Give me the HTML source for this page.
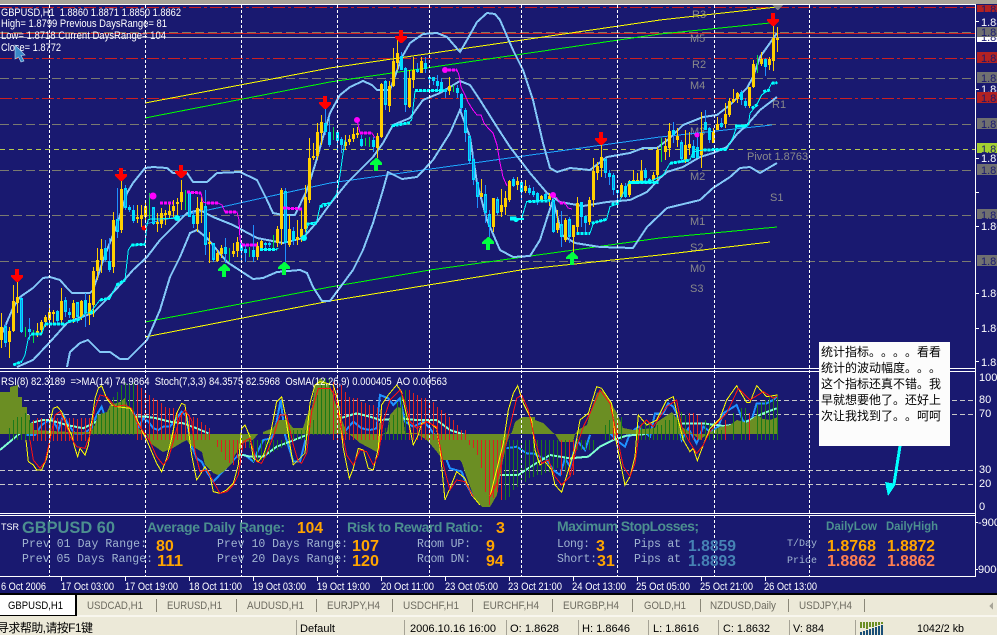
<!DOCTYPE html>
<html lang="zh"><head><meta charset="utf-8"><title>GBPUSD,H1</title>
<style>
html,body{margin:0;padding:0;background:#191970;width:997px;height:635px;overflow:hidden}
svg{display:block}
text{font-family:"Liberation Sans","Noto Sans CJK SC",sans-serif;white-space:pre}
.w{fill:#fff;font-size:11px}
.g{fill:#8a8a8a;font-size:11px}
.tag{fill:#191970;font-size:11px}
.t{fill:#4c8f8f;font-weight:bold;font-size:14px}
.o{fill:#ffa500;font-weight:bold;font-size:16px}
.c{fill:coral;font-weight:bold;font-size:16px}
.m{fill:#a0b4d0;font-family:"Liberation Mono",monospace;font-size:11.5px}
.b{fill:#4682b4;font-size:16px;font-weight:bold}
.tab{fill:#6d6b60;font-size:11px}
.st{fill:#000;font-size:11px}
.cn{fill:#000;font-family:"WenQuanYi Zen Hei","Noto Sans CJK SC",sans-serif;font-size:12px}
.n{vector-effect:non-scaling-stroke;fill:none}
</style></head><body>
<svg xmlns="http://www.w3.org/2000/svg" width="997" height="635" viewBox="0 0 997 635" shape-rendering="crispEdges">
<defs>
<path id="dn" d="M-2 0H2V6H6V8L1 13H-1L-6 8V6H-2Z" fill="#ff0000"/>
<path id="up" d="M0 0H1L6 5V7H2V13H-2V7H-6V5Z" fill="#00ff40"/>
</defs>
<rect width="997" height="635" fill="#191970"/>
<rect width="997" height="4" fill="#a9a59a"/>
<rect y="4" width="976" height="1" fill="#fff"/>

<!-- horizontal levels -->
<g fill="none" stroke-width="1">
<path d="M0 7.5H975M0 58.5H975M0 98.5H975" stroke="#cc2020" stroke-dasharray="12 3 3 3"/>
<path d="M0 32.5H975M0 78.5H975M0 124.5H975M0 170.5H975M0 215.5H975M0 261.5H975" stroke="#7a7a70" stroke-dasharray="9 4"/>
<path d="M0 149.5H975" stroke="#b4c850" stroke-dasharray="5 4"/>
<path d="M0 33.5H975" stroke="#d02020"/>
<path d="M0 37.5H975" stroke="#a0a0b8"/>
</g>

<!-- pivot labels -->
<g class="g">
<text x="692" y="18" class="g">R3</text><text x="690" y="42" class="g">M5</text><text x="692" y="68" class="g">R2</text><text x="690" y="89" class="g">M4</text><text x="772" y="108" class="g">R1</text><text x="690" y="135" class="g">M3</text><text x="747" y="160" class="g">Pivot 1.8763</text><text x="690" y="180" class="g">M2</text><text x="770" y="201" class="g">S1</text><text x="690" y="225" class="g">M1</text><text x="690" y="251" class="g">S2</text><text x="690" y="272" class="g">M0</text><text x="690" y="292" class="g">S3</text>
</g>

<!-- channels -->
<g fill="none" stroke-width="1">
<path d="M145 103L330 68L660 20L777 7" stroke="#ffff00"/>
<path d="M145 118L330 82L660 34L770 23" stroke="#00ff00"/>
<path d="M145 322L330 287L430 270L660 238L777 227" stroke="#00ff00"/>
<path d="M145 337L330 301L527 269L660 255L770 242" stroke="#ffff00"/>
<path d="M145 224L330 183L660 137L772 125" stroke="#1ea8ff"/>
</g>

<!-- bollinger -->
<g fill="none" stroke="#84c8f8" stroke-width="2">
<path d="M0 338L13 308L20 297L33 288L43 278L50 277L60 280L67 288L72 293L90 293L93 290L105 255L117 225L127 193L133 183L145 168L153 167L167 168L173 173L187 173L193 182L207 182L217 173L240 172L257 180L267 200L273 213L283 215L295 215L307 190L315 165L330 113L340 95L350 87L363 81L372 85L377 90L390 90L402 57L410 43L423 34L437 33L447 37L460 52L467 40L477 22L487 13L495 14L500 20L513 50L523 70L533 100L543 143L550 168L557 172L570 168L590 170L607 157L630 153L643 148L657 148L670 138L683 125L703 117L717 115L730 105L747 88L753 77L760 57L770 43L777 33"/>
<path d="M17 367L33 360L50 342L67 323L73 320L93 313L103 303L120 285L133 270L147 257L160 240L173 227L187 213L200 210L213 217L233 225L257 238L283 243L303 238L317 222L330 204L347 183L363 167L373 157L383 143L393 125L410 118L423 100L440 93L460 81L470 85L480 100L497 127L510 147L530 173L547 193L560 202L583 206L607 202L630 200L647 192L660 178L667 172L683 167L700 157L713 153L727 147L737 134L747 125L760 110L777 97"/>
<path d="M67 367L70 352L80 343L88 340L100 352L110 352L120 359L128 359L147 340L160 310L170 277L180 257L190 233L197 230L207 238L227 262L253 279L263 278L277 272L300 270L307 273L313 287L322 301L330 301L353 270L363 250L373 223L383 190L388 172L402 179L417 177L433 160L450 133L460 110L470 137L477 183L487 220L500 250L513 257L530 256L540 240L548 215L553 200L557 215L562 235L575 243L600 247L633 248L647 227L667 208L700 200L713 188L730 177L740 168L750 167L760 173L777 163"/>
</g>

<!-- candles -->
<g fill="none" transform="translate(.5 0)">
<path stroke="#ffcf00" stroke-width="1" d="M1 313V348M9 327V358M13 285V332M17 282V313M37 323V337M41 320V335M45 315V327M49 304V323M53 310V323M61 288V323M73 300V323M81 300V320M89 295V325M93 267V317M97 248V280M101 239V273M113 212V273M121 175V233M137 205V223M141 205V227M145 202V223M157 213V232M161 208V228M165 210V225M169 203V218M173 200V217M177 198V215M181 180V210M197 197V232M201 197V223M209 232V263M217 250V262M221 245V258M233 243V257M237 237V257M257 242V260M261 240V250M277 226V247M281 188V245M289 215V247M297 220V245M301 210V242M305 185V232M309 138V203M313 143V160M317 123V160M321 115V145M345 135V150M349 135V145M353 128V142M357 127V138M377 133V158M381 83V138M389 81V112M393 48V87M397 40V70M409 70V108M413 57V88M421 57V73M449 77V95M481 179V197M493 198V232M501 189V217M505 191V215M509 180V202M517 177V190M525 180V193M541 195V202M549 193V206M557 210V233M565 218V242M573 225V253M577 197V233M589 197V225M593 158V207M597 162V180M601 145V177M621 183V198M629 180V197M633 170V183M637 173V184M641 160V183M653 172V183M657 147V180M665 138V160M669 123V157M677 128V147M685 130V163M689 132V155M701 112V168M713 128V143M717 117V130M725 103V128M729 98V117M733 89V103M737 92V103M749 87V108M753 60V88M761 52V66M769 57V70M773 25V71M777 27V52"/>
<path stroke="#ffcf00" stroke-width="3" d="M1 327V340M9 331V342M13 301V331M17 297V303M37 331V333M41 322V330M45 317V322M49 312V320M53 312V314M61 301V320M73 303V318M81 301V317M89 303V315M93 271V305M97 260V271M101 249V260M113 220V267M121 189V230M137 217V219M141 215V219M145 206V217M157 222V224M161 213V224M165 213V215M169 211V215M173 206V211M177 202V204M181 192V202M197 208V224M201 202V210M209 242V244M217 253V261M221 248V254M233 251V254M237 242V251M257 246V257M261 241V248M277 229V243M281 190V229M289 229V245M297 237V240M301 229V237M305 197V229M309 158V200M313 156V158M317 132V156M321 122V133M345 142V146M349 139V142M353 134V139M357 133V135M377 136V148M381 84V137M389 86V106M393 61V86M397 53V63M409 78V107M413 70V80M421 61V73M449 86V91M481 193V197M493 198V227M501 205V212M505 198V207M509 181V200M517 181V185M525 186V191M541 196V201M549 196V200M557 223V230M565 220V240M573 225V237M577 203V227M589 200V222M593 171V200M597 166V173M601 157V168M621 185V197M629 181V195M633 180V183M637 180V183M641 171V182M653 175V180M657 150V175M665 146V152M669 131V148M677 136V140M685 145V160M689 144V148M701 133V155M713 132V143M717 124V130M725 114V124M729 101V115M733 99V102M737 93V99M749 87V106M753 64V87M761 59V64M769 59V65M773 38V61M777 38V40"/>
<path stroke="#1e90ff" stroke-width="1" d="M5 323V347M21 297V333M29 318V340M57 310V323M65 297V317M69 308V318M77 302V323M85 293V327M105 240V262M109 238V272M117 188V238M125 185V210M129 205V212M133 205V223M153 207V225M189 192V217M193 210V228M205 190V255M213 243V262M225 238V263M241 242V260M245 245V262M253 225V262M265 242V248M269 242V247M285 188V262M293 227V245M325 108V135M329 117V147M337 132V150M341 137V153M361 135V147M373 137V152M385 80V110M401 52V70M405 67V112M417 63V73M425 57V73M429 75V87M433 77V85M437 75V90M441 78V92M445 88V98M457 85V98M461 93V112M465 108V142M469 135V163M473 155V185M477 180V208M485 185V223M489 210V237M497 197V215M513 177V187M521 181V200M529 185V195M533 187V197M537 192V205M545 193V200M553 198V233M561 211V247M569 217V243M581 202V227M585 215V233M605 158V178M609 170V185M613 173V195M617 190V207M625 183V198M645 168V183M649 178V183M673 122V143M681 140V163M693 140V158M697 132V158M705 110V130M709 127V143M721 118V128M741 90V105M745 98V108M765 58V76"/>
<path stroke="#00dcff" stroke-width="3" d="M5 326V343M21 298V332M29 329V332M57 311V321M65 300V312M69 312V315M77 302V317M85 300V313M105 248V260M109 261V270M117 219V232M125 188V208M129 207V210M133 210V221M153 207V224M189 192V217M193 215V224M205 206V245M213 243V260M225 247V254M241 243V251M245 249V253M253 250V257M265 243V245M269 243V245M285 191V243M293 231V241M325 123V132M329 132V145M337 132V141M341 139V145M361 139V146M373 140V147M385 81V105M401 56V70M405 68V105M417 69V72M425 63V69M429 77V79M433 77V81M437 81V86M441 82V90M445 89V92M457 88V93M461 94V108M465 110V133M469 136V161M473 159V180M477 182V197M485 194V213M489 214V227M497 199V213M513 179V186M521 182V192M529 188V193M533 191V195M537 193V202M545 194V199M553 200V232M561 224V237M569 219V237M581 202V217M585 216V223M605 159V173M609 173V177M613 175V190M617 190V193M625 186V197M645 170V178M649 179V182M673 130V135M681 142V159M693 146V158M697 147V158M705 122V130M709 128V140M721 123V127M741 92V100M745 101V106M765 59V67"/>
<path stroke="#1a8cf0" stroke-width="1" d="M5 328V341M21 300V330M65 302V310M77 304V315M117 221V230M125 190V206M153 209V222M189 194V215M205 208V243M213 245V258M285 193V241M385 83V103M405 70V103M465 112V131M469 138V159M473 161V178M477 184V195M485 196V211M489 216V225M497 201V211M553 202V230M561 226V235M569 221V235M605 161V171M613 177V188M681 144V157"/>
<path stroke="#00e040" stroke-width="1" d="M25 327V337M33 330V343M149 193V220M185 190V210M229 248V262M249 247V257M273 235V248M333 127V140M365 138V146M369 137V147M453 85V92M661 138V162M757 55V73"/>
</g>

<!-- stops (cyan) -->
<g fill="none" stroke="#00ffff">
<g transform="translate(0 160) scale(.3333)">
<path class="n" stroke-width="1" d="M40 615L65 605L75 585L85 535L95 522L125 522L135 492L195 492L205 485L240 478L255 460L270 458L300 420L330 415L340 395L350 375L375 360L385 270L395 255L435 253L440 200L445 178L520 175L530 172"/>
<path class="n" stroke-width="3" stroke-dasharray="3 1" d="M40 615L65 605M95 522L125 522M135 492L195 492M205 485L240 478M270 458L285 455M300 420L330 415M350 375L375 360M395 255L435 253"/>
<path class="n" stroke-width="1" d="M725 262L730 255M780 268L830 268L835 265"/>
<path class="n" stroke-width="3" stroke-dasharray="3 1" d="M780 268L830 268M920 192L950 190M960 140L990 130"/>
<path class="n" stroke-width="1" d="M905 235L915 232L925 192L950 185L960 140L970 130L990 130"/>
</g>
<g transform="translate(330 20) scale(.3333)">
<path class="n" stroke-width="1" d="M0 550L20 522L30 465L40 395L45 360M185 318L235 308L245 300L255 215L340 210M575 595L590 545L660 540M780 640L790 610L830 598L840 560L860 553L870 540L895 490L985 487"/>
<path class="n" stroke-width="3" stroke-dasharray="3 1" d="M185 318L240 308M255 212L340 212M595 545L660 542M740 640L780 640M785 610L830 598M845 553L865 550M895 488L985 487"/>
<path class="n" stroke-width="4" d="M540 595L560 595"/>
</g>
<g transform="translate(500 120) scale(.3333)">
<path class="n" stroke-width="1" d="M395 188L450 185L460 180L490 165L510 130L570 120L580 95L610 90L680 88L700 50L710 20L740 18"/>
<path class="n" stroke-width="3" stroke-dasharray="3 1" d="M395 188L450 185M510 130L570 120M610 90L680 88M705 18L740 18"/>
</g>
<g transform="translate(660 0) scale(.3333)">
<path class="n" stroke-width="1" d="M230 378L265 375L270 340L290 315L305 285L325 270L335 250L350 248"/>
<path class="n" stroke-width="3" stroke-dasharray="3 1" d="M230 378L265 377M275 325L295 312M310 275L330 270M335 250L352 248"/>
</g>
</g>

<!-- magenta -->
<g fill="none" stroke="#ff00ff">
<path stroke-width="1" d="M187 192L201 193L203 202L207 203L218 203L222 205L225 212L237 212L239 220L240 240L242 245L257 245M357 120L360 133L372 133L375 138M445 70L457 70L459 75L461 87L465 95L468 102L473 110L477 115L481 115L484 123L488 128L493 133L497 145L500 163L503 177L507 186M553 195L557 198L560 203L565 203L568 208L572 209M283 208L302 209"/>
<path stroke-width="3" stroke-dasharray="3 1" d="M160 203L173 203M187 192L201 193M207 203L218 203M225 212L237 212M242 245L257 245M283 208L302 209M360 133L372 133M448 70L457 70M560 203L565 203"/>
</g>
<g shape-rendering="auto">
<circle cx="153" cy="196" r="3.5" fill="#f0f"/><circle cx="357" cy="120" r="3" fill="#f0f"/><circle cx="445" cy="70" r="3" fill="#f0f"/><circle cx="553" cy="195" r="3" fill="#f0f"/><circle cx="697" cy="135" r="2.5" fill="#f0f"/>
<circle cx="144" cy="228" r="2.5" fill="#f00000"/><circle cx="177" cy="218" r="3" fill="#0ff"/><circle cx="304" cy="238" r="3" fill="#0ff"/>
<path d="M511 218H524V220H519L517 222H515L513 220Z" fill="#0ff"/>
</g>

<!-- arrows -->
<use href="#dn" x="17" y="269"/><use href="#dn" x="121" y="168"/><use href="#dn" x="181" y="165"/><use href="#dn" x="325" y="96"/><use href="#dn" x="401" y="30"/><use href="#dn" x="601" y="132"/><use href="#dn" x="773" y="13"/>
<use href="#up" x="224" y="264"/><use href="#up" x="284" y="262"/><use href="#up" x="376" y="158"/><use href="#up" x="488" y="237"/><use href="#up" x="572" y="252"/>
<path d="M772 5H783L778 10H777Z" fill="#808088"/>

<!-- indicator window -->
<g fill="none" stroke-width="1">
<path d="M0 400.5H975M0 414.5H975M0 470.5H975M0 484.5H975" stroke="#c8c8c8" stroke-dasharray="5 3"/>
</g>
<g fill="none">
<g transform="translate(0 365) scale(.3333)">
<path class="n" stroke="#1e90ff" stroke-width="2" d="M80 210L105 210L125 180L155 160L175 195L190 150L205 180L225 205L250 205L275 190L290 150L305 125L320 170L340 125L370 125L400 140L415 190L430 160L445 170L460 190L475 195L490 185L510 185L530 160L545 140L560 155L570 230L590 280L605 290L620 320L640 350L715 270L735 270L760 290L775 255L790 225L815 220L830 170L842 105L855 210L880 290L900 290L920 210L935 180L1030 205L1060 170L1085 190L1110 195L1130 190L1140 90L1165 100L1180 120L1200 100L1215 170L1240 185L1270 170L1290 190L1320 235L1350 310L1385 320L1400 360L1420 395"/>
<path class="n" stroke="#7fffd4" stroke-width="2" d="M0 255L30 230L60 205L100 172L130 165L150 165L200 180L250 190L290 170L330 165L370 155L410 155L440 155L470 160L510 170L550 175L590 190L625 205M720 268L750 275L790 275L830 245L870 230L920 210M1020 160L1070 145L1110 155L1140 165L1200 160L1250 165L1310 165L1350 195L1395 210"/>
</g>
<g transform="translate(490 370) scale(.3333)">
<path class="n" stroke="#1e90ff" stroke-width="2" d="M50 235L80 230L110 250L130 250L150 260L170 270L190 300L210 315L225 265L240 290L260 210L285 240L300 195M360 190L385 215L405 230L420 190L445 170L480 200L495 130L520 130L535 100L550 110L560 130L575 210L595 175L620 220L640 170L660 185L685 170L700 130L740 105L760 155L785 150L800 100L830 100L850 90L860 80"/>
<path class="n" stroke="#7fffd4" stroke-width="2" d="M30 315L85 315L130 285L180 255L240 265L295 260L330 230L370 210L410 197L470 192M575 160L640 160L700 168L760 160L820 130L860 115"/>
</g>
</g>
<path fill="#6b8e23" d="M0 392H10V387L18 385V397H22V407H27V415H30V423H33V430L70 432H90V433L95 425L98 415L107 412L110 405L120 402L125 398L128 407L132 408L135 418L138 428L142 432L147 434L150 443L163 452L173 448L183 442L187 440L190 445L202 452L205 465L213 473L218 475L223 472L232 463L235 455L243 443L253 440L258 434H263V432L273 428L278 420H287L293 428H303L307 415L312 407L315 385L320 378L330 385L335 402L340 415L347 433L353 437L360 443L377 452L380 443L383 434L387 432L390 415L397 407L402 408L405 433H417V434L427 440L437 452L443 460H460L462 463L467 478L475 500L482 507H490L497 495L503 460L507 443L510 434L512 432L515 422L522 417H535V420L543 423L552 432L555 434L560 442H573L575 434L578 430L587 425L590 413L597 393L603 390L607 397L612 405L617 413L620 420L623 428L633 430L655 428L657 422L663 418L672 412L678 420L682 427L693 434L700 440L707 434L720 427L730 425L737 420L747 423L757 415L763 419L770 420L778 417V434H0Z"/>
<g fill="none" stroke-width="1" transform="translate(.5 0)">
<path stroke="#1a7a1a" d="M9 428V440M13 420V440M17 417V440M21 417V440M25 413V440M29 420V440M93 415V435M97 414V435M101 413V435M105 412V435M109 410V435M113 397V435M117 392V435M121 385V435M125 383V435M129 383V435M133 383V435M249 433V448M253 440V462M257 440V462M261 440V460M265 440V458M269 440V455M273 440V452M277 440V450M281 440V448M285 440V446M289 430V440M293 430V440M297 430V440M301 430V440M305 430V440M309 425V435M313 420V435M317 395V435M321 385V435M325 378V435M329 378V435M385 428V440M389 422V440M393 415V440M397 402V440M401 392V440M405 390V440M505 440V500M509 440V497M513 440V490M517 440V487M521 440V483M525 440V482M529 440V478M533 440V477M537 440V475M541 440V475M545 440V473M549 440V472M553 440V470M557 440V468M565 440V472M577 440V450M581 440V450M585 440V450M589 440V450M593 440V450M605 425V440M609 420V440M621 417V440M637 420V440M641 423V440M645 420V440M649 425V440M653 425V440M657 425V440M661 425V440M665 420V440M669 420V440M673 415V440M677 412V440M681 412V440M685 415V440M705 420V440M709 423V440M713 425V440M717 428V440M721 430V440M733 413V440M741 408V440M745 408V440M757 405V440M761 402V440M765 400V440M769 397V440M773 395V440M777 395V440"/>
<path stroke="#dd2020" d="M33 420V441M37 418V441M41 418V441M45 419V441M49 418V441M53 418V441M57 418V441M61 419V441M65 418V441M69 418V441M73 418V441M77 419V441M81 418V441M85 418V441M89 418V441M137 385V440M141 388V440M145 393V440M149 395V440M153 398V440M157 400V440M161 403V440M165 407V440M169 408V440M173 408V440M177 412V440M181 413V440M185 413V440M189 415V440M193 417V440M197 418V440M201 422V440M205 425V440M209 428V440M217 440V447M221 440V452M225 440V460M229 440V463M233 440V465M237 440V458M241 440V453M245 440V448M333 382V440M337 380V440M341 385V440M345 392V440M349 397V440M353 398V440M357 398V440M361 402V440M365 403V440M369 405V440M373 405V440M377 408V440M381 410V440M409 390V440M413 393V440M417 395V440M421 398V440M425 398V440M429 402V440M433 402V440M437 407V440M441 410V440M445 413V440M449 417V440M453 420V440M457 425V440M461 430V440M465 430V440M469 440V445M473 440V448M477 440V455M481 440V468M485 440V492M489 440V505M493 440V498M497 440V492M501 440V500M561 440V475M569 440V475M573 440V475M613 420V440M617 422V440M689 413V440M693 413V440M697 415V440M701 422V440M725 420V440M749 413V440"/>
</g>
<g fill="none">
<g transform="translate(0 365) scale(.3333)">
<path class="n" stroke="#ffff00" stroke-width="1" d="M78 225L85 290L100 300L110 315L125 315L140 280L150 225L150 170L160 130L172 125L185 140L200 180L215 210L225 250L233 275L240 250L255 270L265 240L275 170L285 100L295 70L305 62L320 100L335 120L350 125L390 130L410 160L425 195L440 225L455 260L470 295L485 320L500 280L515 220L530 145L545 115L555 120L565 190L575 270L590 345L600 330L615 305L630 330L640 380L660 385L680 375L700 355L715 300L725 190L735 180L750 215L760 280L775 290L790 270L810 215L830 110L845 95L855 145L870 240L880 300L895 285L915 265L930 115L945 60L960 50L1000 60L1015 110L1030 250L1048 340L1060 310L1075 250L1090 255L1105 310L1120 315L1135 250L1145 120L1165 90L1190 60L1205 80L1215 130L1230 190L1240 240L1255 210L1265 175L1285 170L1310 190L1320 250L1335 405L1350 370L1370 320L1395 340L1415 390L1440 420"/>
<path class="n" stroke="#ff1010" stroke-width="1" d="M90 225L100 285L120 310L135 290L150 225L165 150L180 140L195 170L210 215L230 245L255 250L270 210L285 130L300 90L320 95L345 125L375 120L395 130L410 170L430 200L450 230L470 275L490 300L505 280L520 230L540 155L555 135L575 165L585 260L600 320L620 315L640 350L660 385L680 380L700 360L715 330L730 230L750 220L770 290L785 295L800 265L820 215L840 150L860 150L880 240L895 290L905 295L920 265L935 140L955 70L990 70L1005 90L1020 170L1040 270L1060 300L1080 255L1100 260L1120 300L1135 270L1150 170L1170 105L1200 75L1215 110L1230 170L1250 190L1280 170L1310 185L1330 300L1350 375L1370 345L1395 350L1420 395"/>
</g>
<g transform="translate(490 370) scale(.3333)">
<path class="n" stroke="#ffff00" stroke-width="1" d="M0 380L20 300L40 220L55 120L70 70L83 47L100 100L125 150L135 240L150 285L165 275L185 300L195 345L215 367L235 300L255 235L270 150L295 130L320 50L335 55L365 100L375 195L390 270L405 345L420 320L435 260L445 135L470 165L500 150L530 90L550 80L565 150L580 210L600 245L610 235L622 272L640 225L660 175L690 145L710 90L740 47L770 97L780 97L800 47L830 80L862 75"/>
<path class="n" stroke="#ff1010" stroke-width="1" d="M0 380L20 340L40 250L60 170L80 85L95 75L115 120L135 210L155 280L175 270L195 320L215 345L240 320L260 230L280 170L300 130L330 60L360 100L380 195L400 290L420 320L435 280L450 170L470 150L490 170L530 110L560 90L575 170L595 210L620 250L640 225L660 185L680 160L710 130L745 55L780 90L820 65L850 85L862 78"/>
</g>
</g>

<!-- vertical grid -->
<path fill="none" stroke="#fff" stroke-width="1" stroke-dasharray="3 2" d="M49.5 5V577M145.5 5V577M241.5 5V577M337.5 5V577M429.5 5V577M521.5 5V577M617.5 5V577M714.5 5V577M809.5 5V577"/>

<!-- indicator text -->
<text class="w" x="1" y="385" textLength="446" lengthAdjust="spacingAndGlyphs">RSI(8) 82.3189  =&gt;MA(14) 74.9864  Stoch(7,3,3) 84.3575 82.5968  OsMA(12,26,9) 0.000405  AO 0.00563</text>

<!-- separators -->
<rect x="0" y="368" width="976" height="1" fill="#fff"/><rect x="0" y="371" width="976" height="1" fill="#fff"/>
<rect x="0" y="513" width="976" height="1" fill="#fff"/><rect x="0" y="515" width="976" height="1" fill="#fff"/>
<rect x="0" y="576" width="976" height="1" fill="#fff"/>
<rect x="975" y="4" width="1" height="573" fill="#fff"/>

<!-- right axis -->
<g fill="#fff">
<rect x="975" y="21" width="4" height="1"/><rect x="975" y="89" width="4" height="1"/><rect x="975" y="158" width="4" height="1"/><rect x="975" y="192" width="4" height="1"/><rect x="975" y="226" width="4" height="1"/><rect x="975" y="293" width="4" height="1"/><rect x="975" y="328" width="4" height="1"/><rect x="975" y="361" width="4" height="1"/>
<rect x="975" y="522" width="3" height="1"/><rect x="975" y="569" width="3" height="1"/>
</g>
<text class="w" x="981" y="26">1.88</text><text class="w" x="981" y="93">1.88</text><text class="w" x="981" y="162">1.87</text><text class="w" x="981" y="230">1.86</text><text class="w" x="981" y="297">1.86</text><text class="w" x="981" y="332">1.86</text><text class="w" x="981" y="366">1.85</text>
<rect x="977" y="5" width="20" height="7" fill="#b22222"/><text class="tag" x="981" y="13">1.88</text>
<rect x="977" y="37" width="20" height="5" fill="#fff"/><text class="tag" x="981" y="41">1.88</text>
<rect x="977" y="27" width="20" height="10" fill="#707070"/><text class="tag" x="981" y="36">1.88</text>
<rect x="977" y="52" width="20" height="11" fill="#b22222"/><text class="tag" x="981" y="62">1.88</text>
<rect x="977" y="72" width="20" height="11" fill="#707070"/><text class="tag" x="981" y="82">1.88</text>
<rect x="977" y="92" width="20" height="11" fill="#b22222"/><text class="tag" x="981" y="102">1.88</text>
<rect x="977" y="118" width="20" height="11" fill="#707070"/><text class="tag" x="981" y="128">1.87</text>
<rect x="977" y="143" width="20" height="10" fill="#a4d030"/><text class="tag" x="981" y="153">1.87</text>
<rect x="977" y="164" width="20" height="11" fill="#707070"/><text class="tag" x="981" y="174">1.87</text>
<rect x="977" y="209" width="20" height="10" fill="#707070"/><text class="tag" x="981" y="219">1.87</text>
<rect x="977" y="255" width="20" height="11" fill="#707070"/><text class="tag" x="981" y="265">1.86</text>
<text class="w" x="979" y="381">100</text><text class="w" x="979" y="403">80</text><text class="w" x="979" y="417">70</text><text class="w" x="979" y="473">30</text><text class="w" x="979" y="487">20</text><text class="w" x="979" y="510">0</text>
<text class="w" x="978" y="526">-9000</text><text class="w" x="978" y="573">9000</text>

<!-- top left text -->
<text class="w" x="1" y="16" textLength="180" lengthAdjust="spacingAndGlyphs">GBPUSD,H1  1.8860 1.8871 1.8850 1.8862</text>
<text class="w" x="1" y="27" textLength="166" lengthAdjust="spacingAndGlyphs">High= 1.8799 Previous DaysRange= 81</text>
<text class="w" x="1" y="39" textLength="165" lengthAdjust="spacingAndGlyphs">Low= 1.8718 Current DaysRange= 104</text>
<text class="w" x="1" y="51" textLength="60" lengthAdjust="spacingAndGlyphs">Close= 1.8772</text>
<path d="M15 45L25 55L21 55.500L24 61L21 62L18.500 57L15 59Z" fill="#3a8ac8" stroke="#c8e0f4" stroke-width=".6" shape-rendering="auto"/>

<!-- TSR panel -->
<text class="w" x="1" y="530" style="font-size:9px" textLength="18" lengthAdjust="spacingAndGlyphs">TSR</text>
<text class="t" x="22" y="533" style="font-size:17px" textLength="93" lengthAdjust="spacingAndGlyphs">GBPUSD 60</text>
<text class="t" x="147" y="532" textLength="138" lengthAdjust="spacing">Average Daily Range:</text>
<text class="o" x="297" y="533" textLength="26" lengthAdjust="spacingAndGlyphs">104</text>
<text class="t" x="347" y="532" textLength="136" lengthAdjust="spacing">Risk to Reward Ratio:</text>
<text class="o" x="496" y="533">3</text>
<text class="t" x="557" y="531" textLength="142" lengthAdjust="spacing">Maximum StopLosses;</text>
<text class="t" x="826" y="530" style="font-size:12px" textLength="51" lengthAdjust="spacingAndGlyphs">DailyLow</text>
<text class="t" x="886" y="530" style="font-size:12px" textLength="52" lengthAdjust="spacingAndGlyphs">DailyHigh</text>

<text class="m" x="22" y="547" textLength="125" lengthAdjust="spacing">Prev 01 Day Range:</text>
<text class="o" x="156" y="551">80</text>
<text class="m" x="22" y="562" textLength="131" lengthAdjust="spacing">Prev 05 Days Range:</text>
<text class="o" x="157" y="566" textLength="26" lengthAdjust="spacingAndGlyphs">111</text>
<text class="m" x="217" y="547" textLength="131" lengthAdjust="spacing">Prev 10 Days Range:</text>
<text class="o" x="352" y="551" textLength="27" lengthAdjust="spacingAndGlyphs">107</text>
<text class="m" x="217" y="562" textLength="131" lengthAdjust="spacing">Prev 20 Days Range:</text>
<text class="o" x="352" y="566" textLength="27" lengthAdjust="spacingAndGlyphs">120</text>
<text class="m" x="417" y="547" textLength="54" lengthAdjust="spacing">Room UP:</text>
<text class="o" x="486" y="551">9</text>
<text class="m" x="417" y="562" textLength="54" lengthAdjust="spacing">Room DN:</text>
<text class="o" x="486" y="566">94</text>
<text class="m" x="557" y="547" textLength="33" lengthAdjust="spacing">Long:</text>
<text class="o" x="596" y="551">3</text>
<text class="m" x="557" y="562" textLength="40" lengthAdjust="spacing">Short:</text>
<text class="o" x="597" y="566">31</text>
<text class="m" x="634" y="547" textLength="47" lengthAdjust="spacing">Pips at</text>
<text class="m" x="634" y="562" textLength="47" lengthAdjust="spacing">Pips at</text>
<text class="b" x="688" y="551" textLength="48" lengthAdjust="spacingAndGlyphs">1.8859</text>
<text class="b" x="688" y="566" textLength="48" lengthAdjust="spacingAndGlyphs">1.8893</text>
<text class="m" x="787" y="546" style="font-size:10px" textLength="30" lengthAdjust="spacing">T/Day</text>
<text class="m" x="787" y="563" style="font-size:10px" textLength="30" lengthAdjust="spacing">Price</text>
<text class="o" x="827" y="551" textLength="49" lengthAdjust="spacingAndGlyphs">1.8768</text>
<text class="o" x="887" y="551" textLength="48" lengthAdjust="spacingAndGlyphs">1.8872</text>
<text class="c" x="827" y="566" textLength="49" lengthAdjust="spacingAndGlyphs">1.8862</text>
<text class="c" x="887" y="566" textLength="48" lengthAdjust="spacingAndGlyphs">1.8862</text>

<!-- time axis -->
<path stroke="#fff" fill="none" d="M61.500 577V581M125.500 577V581M189.500 577V581M253.500 577V581M317.500 577V581M381.500 577V581M445.500 577V581M509.500 577V581M573.500 577V581M637.500 577V581M701.500 577V581M765.500 577V581"/>
<g>
<text class="w" x="1" y="590" textLength="45" lengthAdjust="spacingAndGlyphs">6 Oct 2006</text>
<text class="w" x="61" y="590" textLength="53" lengthAdjust="spacingAndGlyphs">17 Oct 03:00</text>
<text class="w" x="125" y="590" textLength="53" lengthAdjust="spacingAndGlyphs">17 Oct 19:00</text>
<text class="w" x="189" y="590" textLength="53" lengthAdjust="spacingAndGlyphs">18 Oct 11:00</text>
<text class="w" x="253" y="590" textLength="53" lengthAdjust="spacingAndGlyphs">19 Oct 03:00</text>
<text class="w" x="317" y="590" textLength="53" lengthAdjust="spacingAndGlyphs">19 Oct 19:00</text>
<text class="w" x="381" y="590" textLength="53" lengthAdjust="spacingAndGlyphs">20 Oct 11:00</text>
<text class="w" x="445" y="590" textLength="53" lengthAdjust="spacingAndGlyphs">23 Oct 05:00</text>
<text class="w" x="508" y="590" textLength="54" lengthAdjust="spacingAndGlyphs">23 Oct 21:00</text>
<text class="w" x="572" y="590" textLength="54" lengthAdjust="spacingAndGlyphs">24 Oct 13:00</text>
<text class="w" x="636" y="590" textLength="54" lengthAdjust="spacingAndGlyphs">25 Oct 05:00</text>
<text class="w" x="700" y="590" textLength="53" lengthAdjust="spacingAndGlyphs">25 Oct 21:00</text>
<text class="w" x="764" y="590" textLength="53" lengthAdjust="spacingAndGlyphs">26 Oct 13:00</text>
</g>

<!-- note box and arrow -->
<rect x="819" y="342" width="131" height="104" fill="#fcfcfc"/>
<text class="cn" x="821 833 845 857 869 881 893 905 917 929" y="356">统计指标。。。。看看</text>
<text class="cn" x="821 833 845 857 869 881 893 905 917 929" y="372">统计的波动幅度。。。</text>
<text class="cn" x="821 833 845 857 869 881 893 905 917 929" y="388">这个指标还真不错。我</text>
<text class="cn" x="821 833 845 857 869 881 893 905 917 929" y="404">早就想要他了。还好上</text>
<text class="cn" x="821 833 845 857 869 881 893 905 917 929" y="420">次让我找到了。。呵呵</text>
<path d="M900 446L894 484" stroke="#00ffff" stroke-width="3" fill="none"/>
<path d="M885 482L896 484L888 496Z" fill="#00ffff"/>

<!-- tab bar -->
<rect x="0" y="593" width="997" height="42" fill="#ece9d8"/>
<rect x="0" y="593" width="997" height="2" fill="#000"/>
<rect x="0" y="595" width="76" height="21" fill="#fff"/>
<rect x="75" y="595" width="2" height="21" fill="#000"/>
<rect x="0" y="615" width="76" height="1" fill="#000"/>
<rect x="77" y="615" width="920" height="2" fill="#f8f6ee"/>
<text class="st" x="8" y="609" textLength="55" lengthAdjust="spacingAndGlyphs">GBPUSD,H1</text>
<text class="tab" x="87" y="609" textLength="56" lengthAdjust="spacingAndGlyphs">USDCAD,H1</text>
<text class="tab" x="167" y="609" textLength="55" lengthAdjust="spacingAndGlyphs">EURUSD,H1</text>
<text class="tab" x="247" y="609" textLength="57" lengthAdjust="spacingAndGlyphs">AUDUSD,H1</text>
<text class="tab" x="327" y="609" textLength="53" lengthAdjust="spacingAndGlyphs">EURJPY,H4</text>
<text class="tab" x="403" y="609" textLength="56" lengthAdjust="spacingAndGlyphs">USDCHF,H1</text>
<text class="tab" x="483" y="609" textLength="56" lengthAdjust="spacingAndGlyphs">EURCHF,H4</text>
<text class="tab" x="563" y="609" textLength="56" lengthAdjust="spacingAndGlyphs">EURGBP,H4</text>
<text class="tab" x="644" y="609" textLength="42" lengthAdjust="spacingAndGlyphs">GOLD,H1</text>
<text class="tab" x="710" y="609" textLength="66" lengthAdjust="spacingAndGlyphs">NZDUSD,Daily</text>
<text class="tab" x="799" y="609" textLength="53" lengthAdjust="spacingAndGlyphs">USDJPY,H4</text>
<path stroke="#8a8778" fill="none" d="M156.500 599V612M236.500 599V612M316.500 599V612M392.500 599V612M472.500 599V612M552.500 599V612M632.500 599V612M700.500 599V612M788.500 599V612M864.500 599V612"/>
<path d="M993 602V610L989 606Z" fill="#a8a598"/>

<!-- status bar -->
<rect x="0" y="617" width="997" height="18" fill="#ece9d8"/>
<text class="st" x="-3" y="632" style="font-size:12px" textLength="96">寻求帮助,请按F1键</text>
<path fill="none" stroke="#a5a295" d="M296.500 620V635M404.500 620V635M506.500 620V635M578.500 620V635M648.500 620V635M718.500 620V635M789.500 620V635M855.500 620V635"/>
<text class="st" x="300" y="632" textLength="35" lengthAdjust="spacingAndGlyphs">Default</text>
<text class="st" x="410" y="632" textLength="86" lengthAdjust="spacingAndGlyphs">2006.10.16 16:00</text>
<text class="st" x="510" y="632" textLength="49" lengthAdjust="spacingAndGlyphs">O: 1.8628</text>
<text class="st" x="582" y="632" textLength="48" lengthAdjust="spacingAndGlyphs">H: 1.8646</text>
<text class="st" x="653" y="632" textLength="46" lengthAdjust="spacingAndGlyphs">L: 1.8616</text>
<text class="st" x="723" y="632" textLength="47" lengthAdjust="spacingAndGlyphs">C: 1.8632</text>
<text class="st" x="793" y="632" textLength="31" lengthAdjust="spacingAndGlyphs">V: 884</text>
<text class="st" x="917" y="632" textLength="47" lengthAdjust="spacingAndGlyphs">1042/2 kb</text>
<g>
<path fill="#6b8e23" d="M860 622h2v6h-2zM863 622h2v6h-2zM866 622h2v7h-2zM869 622h2v5h-2zM872 622h2v5h-2zM875 622h2v4h-2zM878 622h2v3h-2zM881 622h2v2h-2z"/>
<path fill="#1a4f78" d="M860 632h2v3h-2zM863 631h2v4h-2zM866 630h2v5h-2zM869 629h2v6h-2zM872 628h2v7h-2zM875 627h2v8h-2zM878 626h2v9h-2zM881 625h2v10h-2z"/>
</g>
</svg>
</body></html>
